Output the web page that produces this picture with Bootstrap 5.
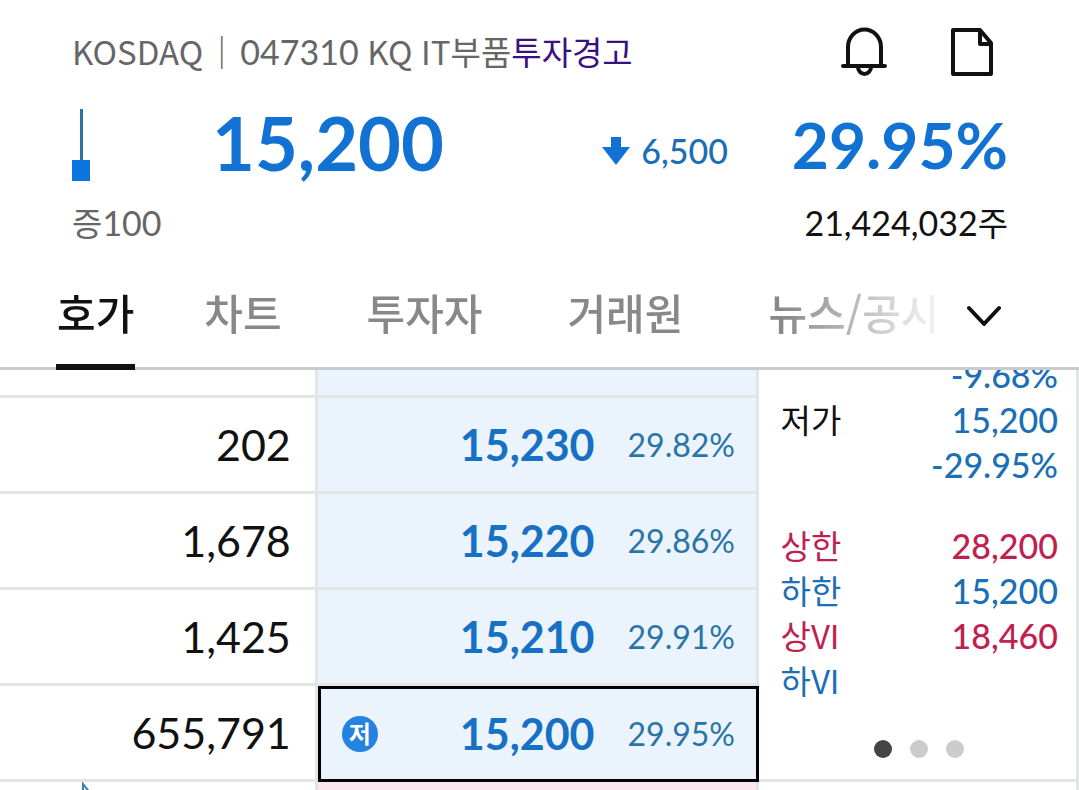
<!DOCTYPE html>
<html lang="ko">
<head>
<meta charset="utf-8">
<meta name="viewport" content="width=device-width, initial-scale=1">
<title>047310 호가</title>
<link href="https://cdn.jsdelivr.net/npm/bootstrap@5.3.0/dist/css/bootstrap.min.css" rel="stylesheet">
<style>
:root { --ko: "Noto Sans CJK KR", sans-serif; --num: Lato, "Noto Sans CJK KR", sans-serif; --line: #e3e4e6; --down: #1a6fb5; --strong: #1272d3; --up: #c01f50; }
body { font-family: var(--ko); font-size: 33px; line-height: 48px; color: #111; background: #fff; }
.num { font-family: var(--num); font-size: 34px; }
.top-area { padding: 26px 71px 0 72px; }
.muted { color: #666; }
.bar-mark { margin: 0 2px; }
.warn { color: #3a1080; text-decoration: none; }
.icon-btn { width: 50px; height: 50px; }
.icon-gap { gap: 58px; margin-right: 10px; }
.quote { height: 84px; margin-top: 26px; color: var(--strong); }
.price { font: 700 74px/82px var(--num); margin-left: 122px; }
.rate { font: 700 64px/86px var(--num); margin-left: 64px; }
.change { gap: 11px; color: var(--down); padding-top: 14px; }
.semi { font-family: "Lato Medium", Lato, "Noto Sans CJK KR", sans-serif; font-weight: 500; }
.volume-row { margin-top: 12px; }
.tabs-bar { margin-top: 16px; height: 107px; padding-right: 72px; border-bottom: 3px solid #c9cacc; }
.tab-list { width: 936px; padding-left: 56px; height: 107px; -webkit-mask-image: linear-gradient(to right, #000 780px, rgba(0,0,0,.12) 932px); mask-image: linear-gradient(to right, #000 780px, rgba(0,0,0,.12) 932px); }
.tab-link { font-size: 42px; font-weight: 500; line-height: 98px; height: 107px; color: #888; text-decoration: none; margin-right: 85px; white-space: nowrap; border-bottom: 6px solid transparent; }
.tab-link.on { color: #111; border-color: #111; padding: 0 1px; margin-right: 69px; }
.more-btn { margin-top: 41px; }
.book { width: 70.3%; }
.side-col { border-right: 3px solid var(--line); }
.book-table { table-layout: fixed; border-collapse: separate; border-spacing: 0; width: 100%; font-family: var(--num); }
.book-table td { height: 96px; padding: 0; border-right: 3px solid var(--line); border-bottom: 3px solid var(--line); }
.book-table .cut td { height: 28px; }
.qty { width: 41.9%; font-size: 43px; text-align: right; }
.book-table td.qty { padding-right: 24px; }
.bid { background: #ebf4fc; }
.level { padding-right: 21px; height: 93px; }
.level-price { font-size: 43px; font-weight: 700; color: #1670c4; }
.level-rate { font-size: 32px; color: #2a74a8; width: 107px; margin-left: 33px; text-align: right; }
.book-table td.current { border: 3px solid #000; }
.current .level { height: 90px; padding-left: 21px; }
.low-mark { width: 36px; height: 36px; border-radius: 50%; background: #2482e0; color: #fff; font: 700 24px/34px var(--ko); text-align: center; }
.ask { background: #fce5ec; }
.side-panel { height: 412px; padding: 0 18px 0 22px; border-bottom: 3px solid var(--line); line-height: 45px; overflow: hidden; }
.side-list { margin-top: -18px; }
.side-item { height: 45px; }
.limits { margin-top: 36px; }
.down { color: var(--down); } .up { color: var(--up); }
.dots { gap: 18px; margin-top: 37px; }
.page-dot { width: 18px; height: 18px; border-radius: 50%; background: #ccc; padding: 0; border: 0; }
.page-dot.on { background: #444; }
</style>
</head>
<body>
<div class="vh-100 overflow-hidden d-flex flex-column">
<header class="top-area">
  <div class="d-flex align-items-center">
    <div class="muted text-nowrap">KOSDAQ<span class="bar-mark">｜</span><span class="num">047310 </span>KQ<span class="num"> </span>IT부품<a href="#" class="warn">투자경고</a></div>
    <div class="d-flex ms-auto icon-gap">
      <button class="btn p-0 border-0 icon-btn" aria-label="알림"><svg class="d-block" width="50" height="50" viewBox="0 0 50 50" fill="none" stroke="#111" stroke-width="4" stroke-linecap="round"><path d="M3 40H45M8 40V21a16 17 0 0 1 33 0V40M18 41a6.500 7 0 0 0 13 0"/></svg></button>
      <button class="btn p-0 border-0 icon-btn" aria-label="메모"><svg class="d-block" width="50" height="50" viewBox="0 0 50 50" fill="none" stroke="#111" stroke-width="4" stroke-linejoin="round"><path d="M5 4H32L43 17V48H5ZM32 4V18H43"/></svg></button>
    </div>
  </div>
  <div class="d-flex quote">
    <svg class="flex-shrink-0" width="18" height="84" viewBox="0 0 18 84"><path d="M8 7h3v52H8z" fill="#2a74a8"/><path d="M0 58h18v21H0z" fill="#0b74e0"/></svg>
    <div class="price">15,200</div>
    <div class="d-flex align-items-center ms-auto change">
      <svg width="28" height="28" viewBox="0 0 28 28"><path d="M9 0h10v10h9L14 28 0 10h9z" fill="#1272d3"/></svg>
      <span class="num semi">6,500</span>
    </div>
    <div class="rate">29.95%</div>
  </div>
  <div class="d-flex justify-content-between volume-row"><span class="muted">증<span class="num">100</span></span><span><span class="num">21,424,032</span>주</span></div>
</header>
<div class="tabs-bar d-flex flex-shrink-0 align-items-start">
  <nav class="tab-list d-flex overflow-hidden flex-shrink-1">
    <a href="#" class="tab-link on">호가</a><a href="#" class="tab-link">차트</a><a href="#" class="tab-link">투자자</a><a href="#" class="tab-link">거래원</a><a href="#" class="tab-link">뉴스/공시</a>
  </nav>
  <button class="btn p-0 border-0 ms-auto more-btn" aria-label="더보기"><svg class="d-block" width="40" height="24" viewBox="0 0 40 24" fill="none" stroke="#111" stroke-width="4" stroke-linecap="round" stroke-linejoin="round"><path d="M2 4L17 20 32 4"/></svg></button>
</div>
<main class="d-flex flex-fill overflow-hidden">
  <div class="book flex-shrink-0">
    <table class="book-table">
      <colgroup><col class="qty"><col></colgroup>
      <tbody>
      <tr class="cut"><td></td><td class="bid"></td></tr>
      <tr><td class="qty">202</td><td class="bid"><div class="level d-flex align-items-center justify-content-end"><span class="level-price">15,230</span><span class="level-rate">29.82%</span></div></td></tr>
      <tr><td class="qty">1,678</td><td class="bid"><div class="level d-flex align-items-center justify-content-end"><span class="level-price">15,220</span><span class="level-rate">29.86%</span></div></td></tr>
      <tr><td class="qty">1,425</td><td class="bid"><div class="level d-flex align-items-center justify-content-end"><span class="level-price">15,210</span><span class="level-rate">29.91%</span></div></td></tr>
      <tr><td class="qty">655,791</td><td class="bid current"><div class="level d-flex align-items-center"><span class="low-mark me-auto">저</span><span class="level-price">15,200</span><span class="level-rate">29.95%</span></div></td></tr>
      <tr><td class="align-top"><svg class="d-block" width="100" height="20" viewBox="0 0 100 20" fill="none" stroke="#3a80a8" stroke-width="2"><path d="M83 12V2L91 12"/></svg></td><td class="ask"></td></tr>
      </tbody>
    </table>
  </div>
  <aside class="side-col flex-fill">
    <div class="side-panel">
      <div class="side-list">
        <div class="side-item text-end down num semi">-9.68%</div>
        <div class="side-item d-flex justify-content-between"><span>저가</span><span class="num semi down">15,200</span></div>
        <div class="side-item text-end down num semi">-29.95%</div>
        <div class="limits">
          <div class="side-item d-flex justify-content-between up"><span>상한</span><span class="num semi">28,200</span></div>
          <div class="side-item d-flex justify-content-between down"><span>하한</span><span class="num semi">15,200</span></div>
          <div class="side-item d-flex justify-content-between up"><span>상VI</span><span class="num semi">18,460</span></div>
          <div class="side-item down">하VI</div>
        </div>
      </div>
      <div class="d-flex justify-content-center dots"><button class="page-dot on" aria-label="1"></button><button class="page-dot" aria-label="2"></button><button class="page-dot" aria-label="3"></button></div>
    </div>
  </aside>
</main>
</div>
<script src="https://cdn.jsdelivr.net/npm/bootstrap@5.3.0/dist/js/bootstrap.bundle.min.js"></script>
</body>
</html>
